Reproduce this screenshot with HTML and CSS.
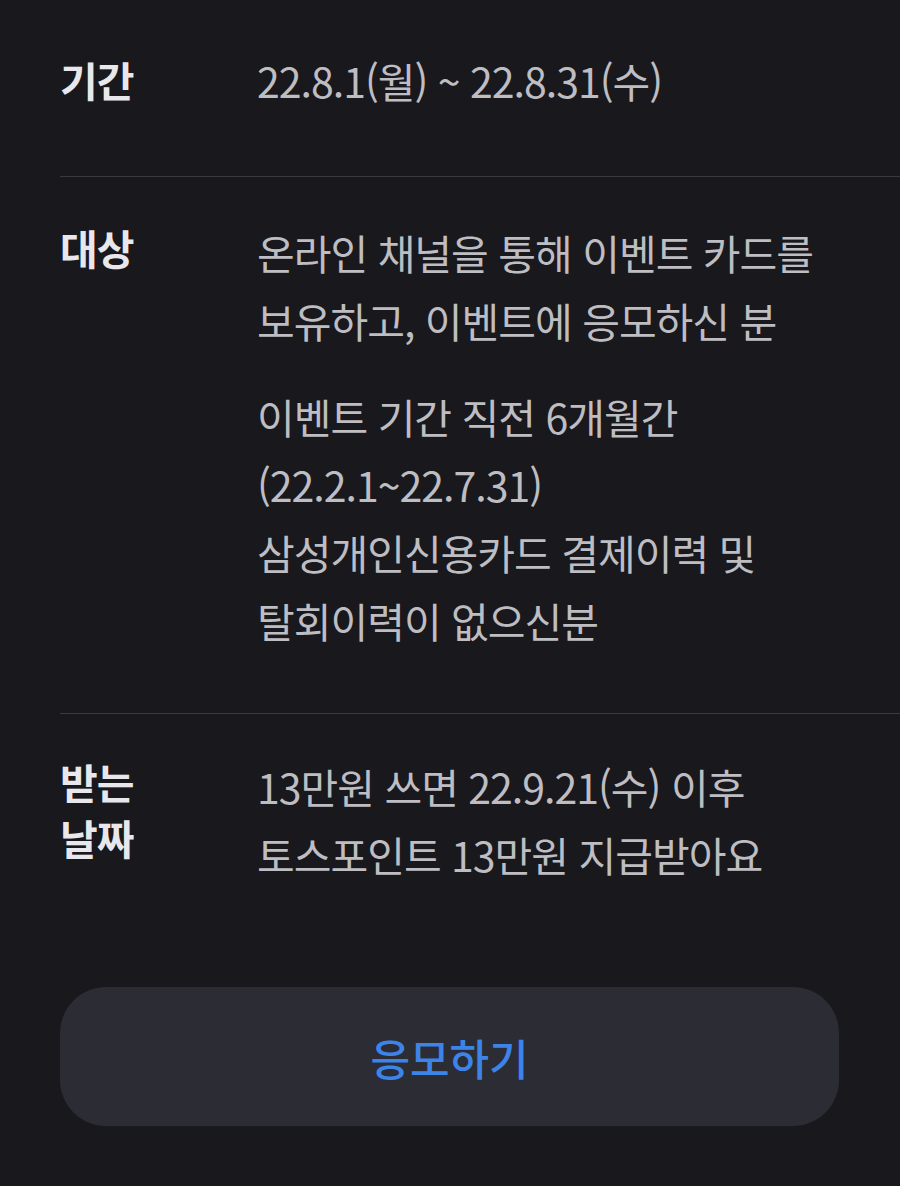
FILE: index.html
```html
<!DOCTYPE html>
<html lang="ko">
<head>
    <meta charset="UTF-8">
    <meta name="viewport" content="width=device-width, initial-scale=1.0">
    <title>이벤트 안내</title>
    <link rel="stylesheet" href="styles.css">
</head>
<body>
    <div class="info">
        <!-- 기간 -->
        <div class="row">
            <div class="label">기간</div>
            <div class="value">
                <p>22.8.1(월) ~ 22.8.31(수)</p>
            </div>
        </div>

        <!-- 대상 -->
        <div class="row">
            <div class="label">대상</div>
            <div class="value">
                <p>온라인 채널을 통해 이벤트 카드를<br>보유하고, 이벤트에 응모하신 분</p>
                <p>이벤트 기간 직전 6개월간<br>(22.2.1~22.7.31)<br>삼성개인신용카드 결제이력 및<br>탈회이력이 없으신분</p>
            </div>
        </div>

        <!-- 받는 날짜 -->
        <div class="row last">
            <div class="label">받는<br>날짜</div>
            <div class="value">
                <p>13만원 쓰면 22.9.21(수) 이후<br>토스포인트 13만원 지급받아요</p>
            </div>
        </div>

        <button type="button" class="apply">응모하기</button>
    </div>
</body>
</html>
```

FILE: styles.css
```css
body {
    margin: 0;
    background: #18181d;
    font-family: "Noto Sans CJK KR", "Noto Sans", sans-serif;
    color: #bdbdc2;
}
.info {
    padding: 46px 0 60px 60px;
}
.row {
    display: grid;
    grid-template-columns: 197px 1fr;
    padding: 41px 0 59px;
    border-bottom: 1px solid #3a3a40;
}
.row:first-child {
    padding-top: 0;
    padding-bottom: 62px;
}
.row.last {
    border-bottom: none;
    padding-top: 38px;
    padding-bottom: 0;
}
.label {
    font-size: 41px;
    font-weight: bold;
    color: #e8e8ec;
    line-height: 56px;
    padding-top: 1px;
    letter-spacing: -1px;
}
.row:first-child .label {
    padding-top: 0;
    line-height: 66px;
}
.value p {
    margin: 0;
    font-size: 41px;
    line-height: 68px;
    letter-spacing: -1px;
}
.value p + p {
    margin-top: 28px;
}
.apply {
    display: block;
    width: 779px;
    height: 139px;
    margin-top: 99px;
    border: none;
    border-radius: 46px;
    background: #2c2c34;
    color: #3d84e8;
    font-family: inherit;
    font-size: 43px;
    font-weight: 500;
    cursor: pointer;
}
```
